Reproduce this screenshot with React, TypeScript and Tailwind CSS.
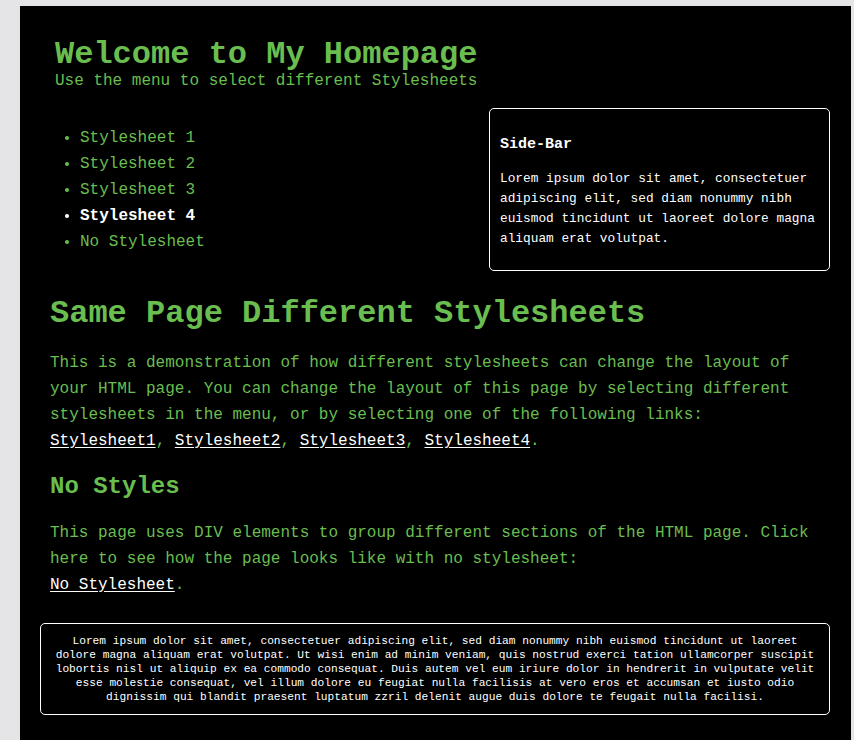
const links = ["Stylesheet1", "Stylesheet2", "Stylesheet3", "Stylesheet4"];

const menu = [
  { label: "Stylesheet 1", active: false },
  { label: "Stylesheet 2", active: false },
  { label: "Stylesheet 3", active: false },
  { label: "Stylesheet 4", active: true },
  { label: "No Stylesheet", active: false },
];

export default function App() {
  return (
    <div className="min-h-screen bg-[#e5e5e7] pt-[6px] pl-[20px] pr-[3px] font-['Liberation_Mono','Courier_New',monospace]">
      <div className="bg-black text-[#6abd4f] min-h-[734px] pb-[40px]">
        {/* Header */}
        <header className="pl-[35px] pt-[33px]">
          <h1 className="text-[32px] leading-[32px] font-bold">Welcome to My Homepage</h1>
          <p className="text-[16px] leading-[20px]">Use the menu to select different Stylesheets</p>
        </header>

        {/* Menu + Side-Bar */}
        <div className="flex items-start mt-[17px]">
          <ul className="list-disc ml-[35px] pl-[25px] mt-[17px] text-[16px] leading-[26px]">
            {menu.map((item) => (
              <li key={item.label} className={item.active ? "text-white font-bold" : ""}>
                {item.label}
              </li>
            ))}
          </ul>
          <div className="ml-auto mr-[21px] w-[341px] border border-white rounded-[5px] pt-[26px] pb-[21px] px-[10px] text-white">
            <h3 className="text-[15px] leading-[20px] font-bold">Side-Bar</h3>
            <p className="mt-[14px] text-[12.8px] leading-[20px]">
              Lorem ipsum dolor sit amet, consectetuer adipiscing elit, sed diam nonummy nibh euismod
              tincidunt ut laoreet dolore magna aliquam erat volutpat.
            </p>
          </div>
        </div>

        {/* Content */}
        <main className="ml-[30px] mr-[36px]">
          <h1 className="mt-[25px] text-[32px] leading-[36px] font-bold">Same Page Different Stylesheets</h1>
          <p className="mt-[18px] text-[16px] leading-[26px]">
            This is a demonstration of how different stylesheets can change the layout of your HTML
            page. You can change the layout of this page by selecting different stylesheets in the
            menu, or by selecting one of the following links:{" "}
            {links.map((l, i) => (
              <span key={l}>
                <a href="#" className="text-white underline underline-offset-2">
                  {l}
                </a>
                {i < links.length - 1 ? ", " : "."}
              </span>
            ))}
          </p>

          <h2 className="mt-[18px] text-[24px] leading-[30px] font-bold">No Styles</h2>
          <p className="mt-[18px] text-[16px] leading-[26px]">
            This page uses DIV elements to group different sections of the HTML page. Click here to
            see how the page looks like with no stylesheet:
            <br />
            <a href="#" className="text-white underline underline-offset-2">
              No Stylesheet
            </a>
            .
          </p>
        </main>

        {/* Footer */}
        <footer className="mt-[25px] ml-[20px] mr-[21px] border border-white rounded-[5px] px-[10px] py-[10px] text-white text-center text-[11.2px] leading-[14px]">
          Lorem ipsum dolor sit amet, consectetuer adipiscing elit, sed diam nonummy nibh euismod
          tincidunt ut laoreet dolore magna aliquam erat volutpat. Ut wisi enim ad minim veniam, quis
          nostrud exerci tation ullamcorper suscipit lobortis nisl ut aliquip ex ea commodo consequat.
          Duis autem vel eum iriure dolor in hendrerit in vulputate velit esse molestie consequat, vel
          illum dolore eu feugiat nulla facilisis at vero eros et accumsan et iusto odio dignissim qui
          blandit praesent luptatum zzril delenit augue duis dolore te feugait nulla facilisi.
        </footer>
      </div>
    </div>
  );
}
